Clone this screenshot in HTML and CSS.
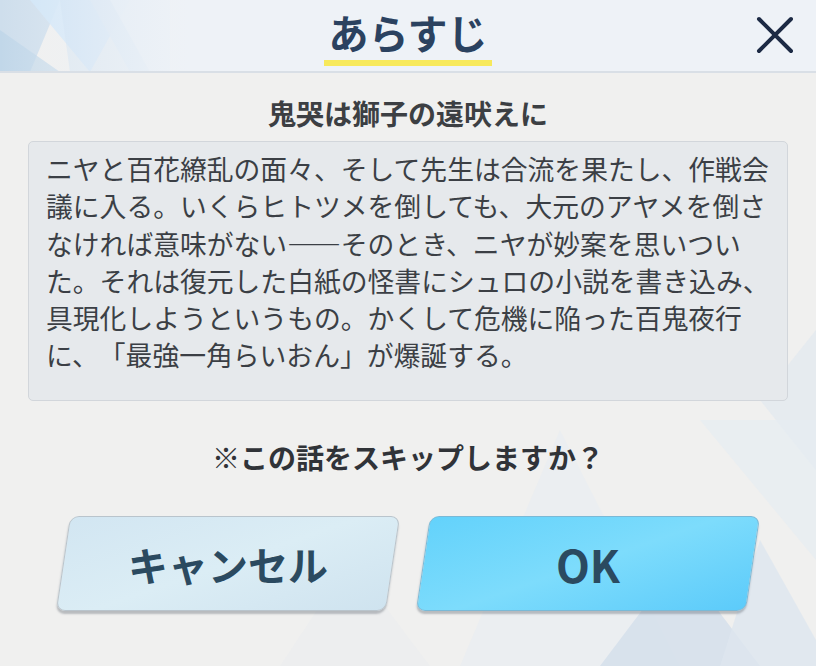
FILE: index.html
```html
<!DOCTYPE html>
<html lang="ja">
<head>
<meta charset="UTF-8" />
<meta name="viewport" content="width=device-width, initial-scale=1.0" />
<title>あらすじ</title>
<link rel="stylesheet" href="styles.css">
</head>
<body>

<div class="dialog">
  <!-- фон: треугольники -->
  <svg class="deco" width="816" height="666" viewBox="0 0 816 666">
    <polygon points="0,0 60,0 30,72 0,72" fill="#c6daeb" opacity="0.8"/>
    <polygon points="30,0 130,0 90,72" fill="#cfe5f8" opacity="0.9"/>
    <polygon points="0,30 60,72 0,72" fill="#bcd4e8" opacity="0.7"/>
    <polygon points="90,0 170,0 170,72 130,72" fill="#dde9f4" opacity="0.9"/>
    <polygon points="60,0 110,0 150,72 70,72" fill="#c8def2" opacity="0.5"/>
    <polygon points="816,330 816,470 760,400" fill="#e1e8ef" opacity="0.7"/>
    <polygon points="700,420 816,420 816,560" fill="#e6ecf2" opacity="0.7"/>
    <polygon points="560,430 680,666 460,666" fill="#e7ecf1" opacity="0.6"/>
    <polygon points="680,560 760,666 600,666" fill="#d3dfeb" opacity="0.8"/>
    <polygon points="760,540 816,640 816,666 720,666" fill="#dde6ef" opacity="0.8"/>
    <polygon points="350,560 430,666 280,666" fill="#eceeef" opacity="0.8"/>
  </svg>

  <div class="header">
    <div class="title">あらすじ</div>
    <span class="close">
      <svg width="38" height="38" viewBox="0 0 38 38">
        <path d="M3 3 L35 35 M35 3 L3 35" stroke="#1c2a44" stroke-width="4" stroke-linecap="round"/>
      </svg>
    </span>
  </div>

  <div class="body">
    <h2 class="episode">鬼哭は獅子の遠吠えに</h2>
    <div class="summary">ニヤと百花繚乱の面々、そして先生は合流を果たし、作戦会<br>議に入る。いくらヒトツメを倒しても、大元のアヤメを倒さ<br>なければ意味がない――そのとき、ニヤが妙案を思いつい<br>た。それは復元した白紙の怪書にシュロの小説を書き込み、<br>具現化しようというもの。かくして危機に陥った百鬼夜行<br>に、「最強一角らいおん」が爆誕する。</div>
    <p class="question">※この話をスキップしますか？</p>
    <div class="buttons">
      <button class="btn btn-cancel"><span>キャンセル</span></button>
      <button class="btn btn-ok"><span>OK</span></button>
    </div>
  </div>
</div>

</body>
</html>
```

FILE: styles.css
```css
/* Основа */
body {
  margin: 0;
  background-color: #f0f0ef;
  font-family: "Noto Sans CJK JP", "Noto Sans", sans-serif;
  color: #3b3f45;
}

.dialog {
  position: relative;
  width: 816px;
  height: 666px;
  overflow: hidden;
  background-color: #f0f0ef;
}

.deco {
  position: absolute;
  left: 0;
  top: 0;
  pointer-events: none;
}

/* Заголовок */
.header {
  position: relative;
  height: 71px;
  background: linear-gradient(90deg, rgba(238,242,247,0) 0px, #eef2f7 190px, #eef2f7 100%);
  border-bottom: 2px solid #d9dfe6;
  display: flex;
  justify-content: center;
  align-items: flex-start;
}

.title {
  margin-top: 4px;
  padding: 0 4px 0;
  font-size: 40px;
  font-weight: 700;
  line-height: 56px;
  color: #2b4260;
  border-bottom: 6px solid #f7e95c;
}

.close {
  position: absolute;
  right: 22px;
  top: 16px;
}

/* Тело */
.body {
  position: relative;
  padding: 0 28px;
}

.episode {
  margin: 20px 0 0;
  text-align: center;
  font-size: 28px;
  font-weight: 700;
  line-height: 40px;
  color: #3c3f43;
}

.summary {
  margin-top: 8px;
  height: 230px;
  padding: 8px 10px 20px 17px;
  background-color: #e6e9ec;
  border: 1px solid #d2d6db;
  border-radius: 5px;
  font-size: 26.8px;
  line-height: 37.3px;
  color: #3b3f45;
  white-space: nowrap;
  text-spacing-trim: space-all;
}

.question {
  margin: 36px 0 0;
  text-align: center;
  font-size: 28px;
  font-weight: 700;
  line-height: 40px;
  color: #303338;
}

/* Кнопки */
.buttons {
  display: flex;
  justify-content: center;
  gap: 30px;
  margin-top: 39px;
}

.btn {
  width: 330px;
  height: 95px;
  border: 1px solid #b9c4cc;
  border-radius: 9px;
  transform: skewX(-8.5deg);
  box-shadow: 0 3px 2px rgba(80,90,100,0.35);
  font-family: inherit;
  font-weight: 700;
  color: #2b4a60;
  cursor: pointer;
}

.btn span {
  display: inline-block;
  transform: skewX(8.5deg);
}

.btn-cancel {
  background: linear-gradient(160deg, #d2e6f2 0%, #dbedf5 50%, #cfe3ef 100%);
  font-size: 40px;
}

.btn-ok {
  background: linear-gradient(160deg, #63d2fb 0%, #7ddcfc 50%, #5ccbfa 100%);
  border-color: #7ab9d6;
  font-size: 44px;
}
```
